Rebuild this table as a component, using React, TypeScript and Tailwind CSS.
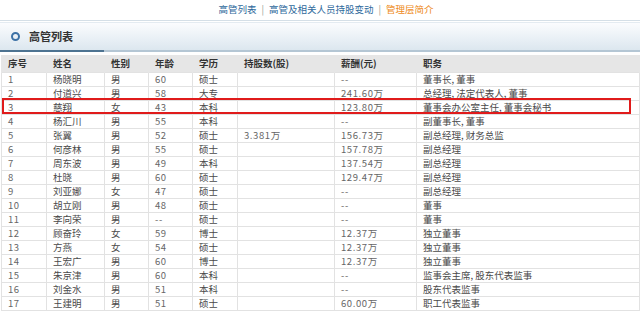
import React from "react";

const rows = [
  ["1", "杨晓明", "男", "60", "硕士", "", "--", "董事长, 董事"],
  ["2", "付道兴", "男", "58", "大专", "", "241.60万", "总经理, 法定代表人, 董事"],
  ["3", "慈翔", "女", "43", "本科", "", "123.80万", "董事会办公室主任, 董事会秘书"],
  ["4", "杨汇川", "男", "55", "本科", "", "--", "副董事长, 董事"],
  ["5", "张翼", "男", "52", "硕士", "3.381万", "156.73万", "副总经理, 财务总监"],
  ["6", "何彦林", "男", "55", "硕士", "", "157.78万", "副总经理"],
  ["7", "周东波", "男", "49", "本科", "", "137.54万", "副总经理"],
  ["8", "杜晓", "男", "60", "硕士", "", "129.47万", "副总经理"],
  ["9", "刘亚娜", "女", "47", "硕士", "", "--", "副总经理"],
  ["10", "胡立刚", "男", "48", "硕士", "", "--", "董事"],
  ["11", "李向荣", "男", "--", "硕士", "", "--", "董事"],
  ["12", "顾奋玲", "女", "59", "博士", "", "12.37万", "独立董事"],
  ["13", "方燕", "女", "54", "硕士", "", "12.37万", "独立董事"],
  ["14", "王宏广", "男", "60", "博士", "", "12.37万", "独立董事"],
  ["15", "朱京津", "男", "60", "本科", "", "--", "监事会主席, 股东代表监事"],
  ["16", "刘金水", "男", "51", "本科", "", "--", "股东代表监事"],
  ["17", "王建明", "男", "51", "硕士", "", "60.00万", "职工代表监事"],
];

const heads = ["序号", "姓名", "性别", "年龄", "学历", "持股数(股)", "薪酬(元)", "职务"];
const widths = ["w-[45px]", "w-[58px]", "w-[44px]", "w-[44px]", "w-[45px]", "w-[97px]", "w-[82px]", ""];

export default function App() {
  return (
    <div className="relative w-[640px] h-[317px] overflow-hidden bg-white text-[#4a4a4a] font-['Noto_Sans_CJK_SC',sans-serif]">
      {/* top links */}
      <div className="h-[21px] flex items-center justify-center gap-[5px] text-[9.5px] leading-none border-b border-[#d5dfe7] pl-[12px]">
        <span className="text-[#2f6a9c]">高管列表</span>
        <span className="text-[#999]">|</span>
        <span className="text-[#2f6a9c]">高管及相关人员持股变动</span>
        <span className="text-[#999]">|</span>
        <span className="text-[#ee8a1a]">管理层简介</span>
      </div>

      {/* panel header */}
      <div className="mt-[1px] h-[28px] flex items-center gap-[9px] pl-[11px] bg-gradient-to-b from-[#fbfcfe] to-[#dce7ef] border-t border-[#e4ebf1]">
        <span className="w-[9px] h-[9px] rounded-full border-2 border-[#3d72a6]" />
        <span className="text-[11px] font-bold text-[#333]">高管列表</span>
      </div>
      <div className="flex h-[2px]">
        <div className="w-[104px] bg-[#4d7391]" />
        <div className="flex-1 bg-[#b4c6d4]" />
      </div>

      {/* table */}
      <table className="mt-[3px] ml-[1px] w-[639px] border-collapse table-fixed text-[9.5px]">
        <thead>
          <tr className="h-[17px] bg-[#e6e6e6]">
            {heads.map((h, i) => (
              <th
                key={i}
                className={`${widths[i]} text-left font-bold text-[#333] pl-[6px] border-x border-[#e6e6e6] leading-[16px]`}
              >
                {h}
              </th>
            ))}
          </tr>
        </thead>
        <tbody>
          {rows.map((r) => (
            <tr key={r[0]} className="h-[14px]">
              {r.map((c, i) => (
                <td
                  key={i}
                  className={`pl-[6px] leading-[13px] border border-[#e2e2e2] whitespace-nowrap ${
                    i === 0 || i === 3 || i === 5 || i === 6 ? "text-[#666] tracking-[0.6px]" : ""
                  }`}
                >
                  {c}
                </td>
              ))}
            </tr>
          ))}
        </tbody>
      </table>

      {/* red highlight box */}
      <div className="absolute left-[2px] top-[98px] w-[629px] h-[16px] border-2 border-[#e01b1b]" />
    </div>
  );
}
